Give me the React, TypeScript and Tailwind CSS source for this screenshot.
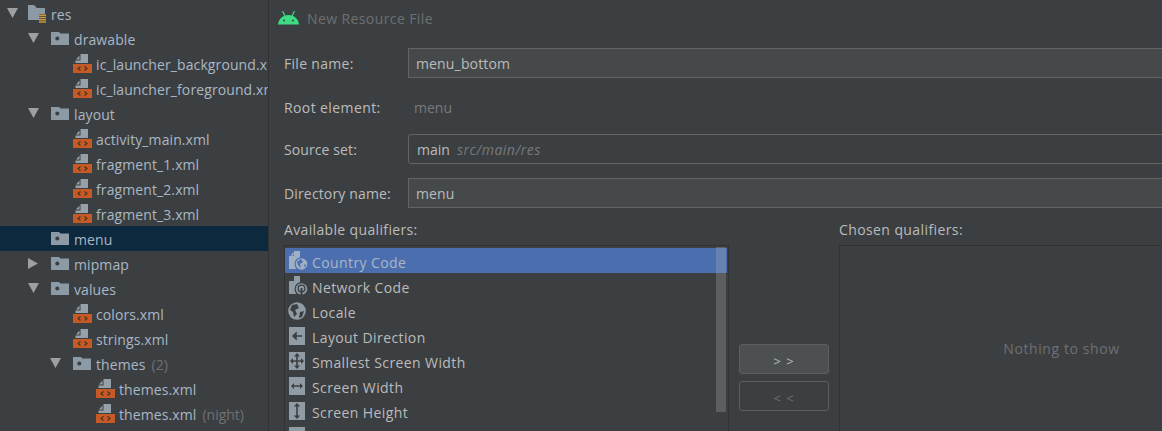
import React from "react";

const FolderIcon = () => (
  <svg width="18" height="13" viewBox="0 0 18 13" className="shrink-0">
    <path d="M0 0h8l1.500 1.500H18V13H0z" fill="#8b9aa5" />
    <circle cx="6.300" cy="6.500" r="2" fill="#3c3f41" />
  </svg>
);

const ResIcon = () => (
  <svg width="19" height="18" viewBox="0 0 19 18" className="shrink-0">
    <path d="M0 0h6l3 3h8v6h-6v6H0z" fill="#8b9aa5" />
    <path d="M11 9.500h7v1.500h-7zM11 11.800h7v1.500h-7zM11 14h7v1.500h-7zM11 16.200h7v1.500h-7z" fill="#c99a3c" />
  </svg>
);

const XmlIcon = () => (
  <svg width="19" height="19" viewBox="0 0 19 19" className="shrink-0">
    <path d="M7.500 0H15v9H2.500V6.500h5z" fill="#95a0a9" />
    <path d="M3 5.500 6.500 1.500v4z" fill="#95a0a9" />
    <rect x="0" y="10" width="19" height="9" fill="#c55a26" />
    <path d="M7.500 12.500 5 14.500 7.500 16.500M11.500 12.500 14 14.500 11.500 16.500" stroke="#45311f" strokeWidth="1.100" fill="none" />
  </svg>
);

const TreeRow = ({
  indent,
  arrow,
  icon,
  label,
  suffix,
  selected,
  arrowClass,
}: {
  indent: number;
  arrow?: "down" | "right";
  icon: React.ReactNode;
  label: string;
  suffix?: string;
  selected?: boolean;
  arrowClass?: string;
}) => (
  <div
    className={`flex h-[25px] items-center whitespace-nowrap pt-[2px] ${selected ? "bg-[#0d293e]" : ""}`}
    style={{ paddingLeft: indent }}
  >
    <div className="flex w-[23px] shrink-0 items-center">
      {arrow === "down" && (
        <svg width="11" height="10" viewBox="0 0 11 10" className={`-mt-[4px] ${arrowClass ?? ""}`}>
          <path d="M0 0h11L5.500 10z" fill="#9da0a2" />
        </svg>
      )}
      {arrow === "right" && (
        <svg width="10" height="11" viewBox="0 0 10 11" className="-mt-[3px]">
          <path d="M0 0l10 5.500-10 5.500z" fill="#9da0a2" />
        </svg>
      )}
    </div>
    <div className="-mt-[2px] flex w-[23px] shrink-0 items-center">{icon}</div>
    <span className="tracking-[0.1px] text-[#a9b7c6]">{label}</span>
    {suffix && <span className="ml-[6px] text-[#6f7173]">{suffix}</span>}
  </div>
);

const Field = ({
  label,
  tracking,
  children,
}: {
  label: string;
  tracking: string;
  children: React.ReactNode;
}) => (
  <div className="flex items-center">
    <div className={`w-[124px] shrink-0 text-[#bbbbbb] ${tracking}`}>{label}</div>
    {children}
  </div>
);

const Square = ({ children }: { children: React.ReactNode }) => (
  <svg width="16" height="18" viewBox="0 0 16 18" className="ml-[4px] shrink-0">
    <rect width="16" height="18" fill="#8f9ca6" />
    {children}
  </svg>
);

const dark = "#3c3f41";

const qualifiers: { label: string; icon: React.ReactNode }[] = [
  {
    label: "Country Code",
    icon: (
      <svg width="20" height="20" viewBox="0 0 20 20" className="ml-[4px] shrink-0">
        <path d="M5 0h6v9H9v9H0V5h5z" fill="#9fb0c4" />
        <path d="M1.500 4.500 4.500 1v3.500z" fill="#9fb0c4" />
        <circle cx="12.500" cy="13" r="7" fill="#4b6eaf" />
        <circle cx="12.500" cy="13" r="5.800" fill="#9fb0c4" />
        <path d="M8 11l4-3 2 3-3 2 1 4-3-3zM15 14l2-1-1 4z" fill="#4b6eaf" />
      </svg>
    ),
  },
  {
    label: "Network Code",
    icon: (
      <svg width="20" height="20" viewBox="0 0 20 20" className="ml-[4px] shrink-0">
        <path d="M5 0h6v9H9v9H0V5h5z" fill="#8f9ca6" />
        <circle cx="12.500" cy="13" r="7" fill="#3c3f41" />
        <circle cx="12.500" cy="13" r="5.800" fill="#8f9ca6" />
        <circle cx="12.500" cy="12.500" r="3.400" fill="none" stroke="#3c3f41" strokeWidth="1.300" />
        <rect x="11.500" y="12" width="2" height="7" fill="#3c3f41" />
      </svg>
    ),
  },
  {
    label: "Locale",
    icon: (
      <svg width="18" height="18" viewBox="0 0 18 18" className="ml-[3px] shrink-0">
        <circle cx="9" cy="9" r="8.800" fill="#8f9ca6" />
        <path d="M4 3l5-1 2 4-4 2 2 4-3 3-1-5-3-2zM12 10l4-1-2 6-3 1z" fill="#3c3f41" />
      </svg>
    ),
  },
  {
    label: "Layout Direction",
    icon: (
      <Square>
        <path d="M4 9h9M4 9l3-3v6z" stroke={dark} strokeWidth="1.500" fill={dark} />
      </Square>
    ),
  },
  {
    label: "Smallest Screen Width",
    icon: (
      <Square>
        <path
          d="M8 1l3 3.500H8.800V8.200H12V6l3 3-3 3V9.800H8.800V13.500H11L8 17l-3-3.500h2.200V9.800H4V12L1 9l3-3v2.200h3.200V4.500H5z"
          fill={dark}
        />
      </Square>
    ),
  },
  {
    label: "Screen Width",
    icon: (
      <Square>
        <path d="M2 9l3-3v2.200h6V6l3 3-3 3V9.800H5V12z" fill={dark} />
      </Square>
    ),
  },
  {
    label: "Screen Height",
    icon: (
      <Square>
        <path d="M8 1l3.200 3.500H8.800v9h2.400L8 17l-3.200-3.500h2.400v-9H4.800z" fill={dark} />
      </Square>
    ),
  },
  {
    label: "",
    icon: <Square>{null}</Square>,
  },
];

export default function App() {
  return (
    <div
      className="flex h-[431px] w-[1162px] overflow-hidden bg-[#3c3f41] text-[14px] leading-[19px]"
      style={{ fontFamily: '"Open Sans", "Noto Sans", sans-serif' }}
    >
      <div className="w-[268px] shrink-0 overflow-hidden pt-[1px]">
        <TreeRow indent={5} arrowClass="ml-[2px]" arrow="down" icon={<ResIcon />} label="res" />
        <TreeRow indent={28} arrow="down" icon={<FolderIcon />} label="drawable" />
        <TreeRow indent={50} icon={<XmlIcon />} label="ic_launcher_background.xml" />
        <TreeRow indent={50} icon={<XmlIcon />} label="ic_launcher_foreground.xml" />
        <TreeRow indent={28} arrow="down" icon={<FolderIcon />} label="layout" />
        <TreeRow indent={50} icon={<XmlIcon />} label="activity_main.xml" />
        <TreeRow indent={50} icon={<XmlIcon />} label="fragment_1.xml" />
        <TreeRow indent={50} icon={<XmlIcon />} label="fragment_2.xml" />
        <TreeRow indent={50} icon={<XmlIcon />} label="fragment_3.xml" />
        <TreeRow indent={28} icon={<FolderIcon />} label="menu" selected />
        <TreeRow indent={28} arrow="right" icon={<FolderIcon />} label="mipmap" />
        <TreeRow indent={28} arrow="down" icon={<FolderIcon />} label="values" />
        <TreeRow indent={50} icon={<XmlIcon />} label="colors.xml" />
        <TreeRow indent={50} icon={<XmlIcon />} label="strings.xml" />
        <TreeRow indent={50} arrow="down" icon={<FolderIcon />} label="themes" suffix="(2)" />
        <TreeRow indent={73} icon={<XmlIcon />} label="themes.xml" />
        <TreeRow indent={73} icon={<XmlIcon />} label="themes.xml" suffix="(night)" />
      </div>

      <div className="w-[1px] shrink-0 bg-[#323232]" />

      <div className="min-w-0 flex-1 overflow-hidden">
        <div className="flex h-[36px] items-center pl-[9px]">
          <svg width="21" height="14" viewBox="0 0 21 14" className="shrink-0">
            <path d="M0 13.500C0.500 8 5 4 10.500 4S20.500 8 21 13.500z" fill="#3ddc84" />
            <path d="M4.500 0l2.500 5M16.500 0L14 5" stroke="#3ddc84" strokeWidth="1.200" />
            <circle cx="6" cy="9.500" r="1" fill="#3c3f41" />
            <circle cx="15" cy="9.500" r="1" fill="#3c3f41" />
          </svg>
          <span className="ml-[8px] tracking-[0.4px] text-[#6d7072]">New Resource File</span>
        </div>

        <div className="ml-[15px] mt-[12px] flex w-[1000px] flex-col">
          <Field label="File name:" tracking="tracking-[0.3px]">
            <div className="flex h-[30px] flex-1 items-center border border-[#646464] bg-[#45494a] pl-[7px] tracking-[0.15px] text-[#bbbbbb]">
              menu_bottom
            </div>
          </Field>
          <div className="mt-[17px]">
            <Field label="Root element:" tracking="tracking-[0.4px]">
              <div className="ml-[6px] flex h-[25px] items-center text-[#77797b]">menu</div>
            </Field>
          </div>
          <div className="mt-[14px]">
            <Field label="Source set:" tracking="tracking-[0.1px]">
              <div className="flex h-[30px] flex-1 items-center rounded-[3px] border border-[#646464] pl-[8px] text-[#bbbbbb]">
                main
                <span className="ml-[7px] italic tracking-[0.5px] text-[#77797b]">src/main/res</span>
              </div>
            </Field>
          </div>
          <div className="mt-[14px]">
            <Field label="Directory name:" tracking="tracking-[0.15px]">
              <div className="flex h-[30px] flex-1 items-center border border-[#646464] bg-[#45494a] pl-[7px] tracking-[0.15px] text-[#bbbbbb]">
                menu
              </div>
            </Field>
          </div>

          <div className="mt-[12px] flex">
            <div className="w-[445px] shrink-0">
              <div className="h-[20px] leading-[20px] tracking-[0.35px] text-[#bbbbbb]">Available qualifiers:</div>
              <div className="relative mt-[5px] h-[200px] overflow-hidden border border-[#323232] pr-[1px] pt-[2px]">
                {qualifiers.map((q, i) => (
                  <div
                    key={i}
                    className={`flex h-[25px] items-center ${i === 0 ? "bg-[#4b6eaf]" : ""}`}
                  >
                    <div className="flex w-[27px] shrink-0 items-center">{q.icon}</div>
                    <span className={`pt-[3px] tracking-[0.4px] ${i === 0 ? "text-[#a9b7c6]" : "text-[#bbbbbb]"}`}>
                      {q.label}
                    </span>
                  </div>
                ))}
                <div className="absolute left-[431px] top-[1px] h-[165px] w-[10px] bg-[#bbbbbb]/25" />
              </div>
            </div>

            <div className="flex w-[110px] shrink-0 flex-col items-center gap-[7px] pt-[124px]">
              <div className="flex h-[30px] w-[90px] items-center justify-center rounded-[3px] border border-[#5e6060] bg-[#4c5052] pt-[5px] text-[13px] tracking-[1px] text-[#bbbbbb]">
                &gt; &gt;
              </div>
              <div className="flex h-[30px] w-[90px] items-center justify-center rounded-[3px] border border-[#5e6060] pt-[5px] text-[13px] tracking-[1px] text-[#6d7072]">
                &lt; &lt;
              </div>
            </div>

            <div className="w-[445px] shrink-0">
              <div className="h-[20px] leading-[20px] tracking-[0.4px] text-[#bbbbbb]">Chosen qualifiers:</div>
              <div className="mt-[5px] flex h-[200px] justify-center border border-[#323232] pt-[93px] tracking-[0.6px] text-[#6d7072]">
                Nothing to show
              </div>
            </div>
          </div>
        </div>
      </div>
    </div>
  );
}
